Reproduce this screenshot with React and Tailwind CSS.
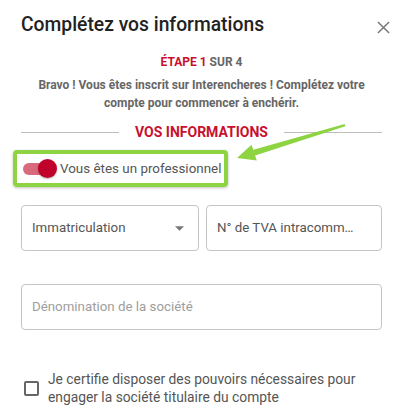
import React from "react";

export default function App() {
  return (
    <div className="relative w-[403px] h-[417px] overflow-hidden bg-white" style={{ fontFamily: "Roboto, 'Liberation Sans', sans-serif" }}>
      {/* Header */}
      <div className="flex items-center justify-between pl-[21px] pr-[13px] pt-[13px] h-[37px]">
        <h2 className="text-[19.3px] leading-[24px] font-medium text-[#222]">Complétez vos informations</h2>
        <svg width="13" height="13" viewBox="0 0 14 14" className="mt-[4px]">
          <path d="M1 1 L13 13 M13 1 L1 13" stroke="#777" strokeWidth="1.6" />
        </svg>
      </div>

      {/* Step */}
      <div className="mt-[17px] text-center text-[12px] leading-[16px] font-bold">
        <span className="text-[#c8102e]">ÉTAPE 1</span> <span className="text-[#666]">SUR 4</span>
      </div>
      <p className="mt-[6px] px-[30px] text-center text-[12px] leading-[18px] font-bold text-[#666]">
        Bravo ! Vous êtes inscrit sur Interencheres ! Complétez votre compte pour commencer à enchérir.
      </p>

      {/* Divider */}
      <div className="mt-[11px] mx-[21px] flex items-center gap-[16px]">
        <div className="flex-1 h-px bg-[#bdbdbd]" />
        <span className="text-[14px] leading-[18px] font-bold text-[#c8102e]">VOS INFORMATIONS</span>
        <div className="flex-1 h-px bg-[#bdbdbd]" />
      </div>

      {/* Toggle highlighted */}
      <div className="mt-[9px] ml-[13px] w-[215px] h-[37px] rounded-[4px] border-[4px] border-[#8ed442] flex items-center pl-[6px] shadow-[0_1px_3px_rgba(0,0,0,0.25)]">
        <div className="relative w-[30px] h-[12px] rounded-full bg-[#d9697c] shrink-0">
          <div className="absolute right-[-4px] top-[-4px] w-[19px] h-[19px] rounded-full bg-[#c0002a] shadow-[0_1px_2px_rgba(0,0,0,0.3)]" />
        </div>
        <span className="ml-[7px] whitespace-nowrap text-[13.4px] leading-[20px] text-[#555]">Vous êtes un professionnel</span>
      </div>

      {/* Row inputs */}
      <div className="mt-[18px] mx-[21px] flex gap-[7px]">
        <div className="w-[178px] h-[46px] rounded-[4px] border border-[#c4c4c4] flex items-center justify-between pl-[10px] pr-[14px]">
          <span className="text-[13.3px] text-[#555]">Immatriculation</span>
          <svg width="9" height="5" viewBox="0 0 10 5"><path d="M0 0 L10 0 L5 5 Z" fill="#777" /></svg>
        </div>
        <div className="flex-1 min-w-0 h-[46px] rounded-[4px] border border-[#c4c4c4] flex items-center pl-[10px] pr-[24px]">
          <span className="text-[13.3px] text-[#555] truncate">N° de TVA intracommunautaire</span>
        </div>
      </div>

      <div className="mt-[33px] mx-[21px] h-[46px] rounded-[4px] border border-[#c4c4c4] flex items-center pl-[10px]">
        <span className="text-[13.3px] text-[#9e9e9e]">Dénomination de la société</span>
      </div>

      {/* Checkbox */}
      <div className="mt-[40px] ml-[24px] flex items-center">
        <div className="w-[15px] h-[15px] rounded-[2px] border-2 border-[#666] shrink-0" />
        <p className="ml-[9px] text-[13.8px] leading-[18px] text-[#555]">
          Je certifie disposer des pouvoirs nécessaires pour<br />engager la société titulaire du compte
        </p>
      </div>

      {/* Arrow */}
      <svg className="absolute left-0 top-0 pointer-events-none" width="403" height="417" viewBox="0 0 403 417">
        <polygon
          points="237,158 251.5,144.8 253.3,149.8 344.7,124 345.3,126.2 255.1,155.6 256.8,160.5"
          fill="#8ed442"
        />
      </svg>
    </div>
  );
}
